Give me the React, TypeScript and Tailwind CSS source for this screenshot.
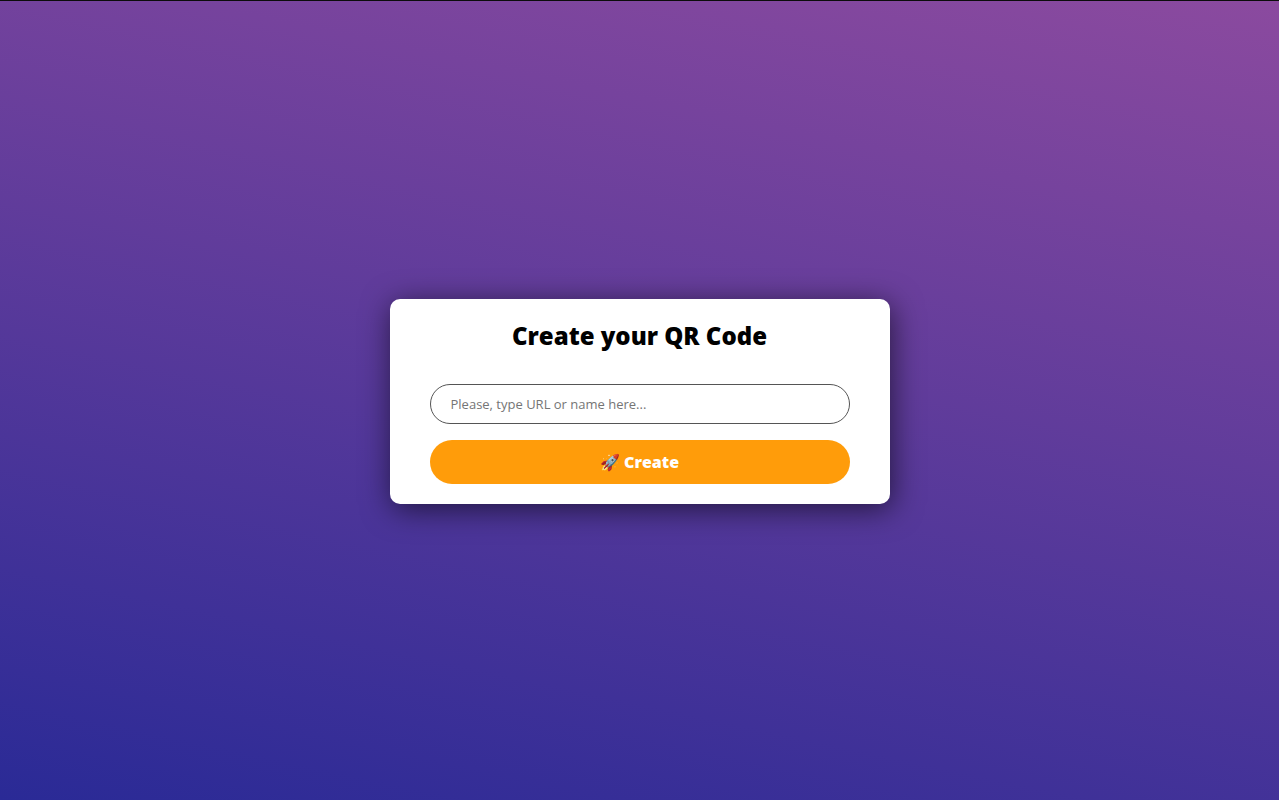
import { useState } from "react";

export default function App() {
  const [value, setValue] = useState("");

  return (
    <main className="flex min-h-screen items-center justify-center border-t border-[#0c0c0c] bg-[linear-gradient(12deg,#2a2a96_0%,#8b4a9f_100%)] px-4 pt-0.5 font-['Open_Sans','Noto_Sans',sans-serif] text-black">
      <form
        onSubmit={(e) => e.preventDefault()}
        className="flex w-full max-w-[500px] flex-col rounded-[10px] bg-white px-10 py-5 shadow-[2px_5px_30px_rgba(0,0,0,0.6)]"
      >
        <h1 className="mb-8 text-center text-2xl leading-[33px] font-extrabold">
          Create your QR Code
        </h1>
        <input
          type="text"
          aria-label="URL or name"
          placeholder="Please, type URL or name here..."
          value={value}
          onChange={(e) => setValue(e.target.value)}
          className="mb-4 h-10 w-full rounded-full border border-[#555] px-5 text-[13px] outline-none placeholder:text-[#757575]"
        />
        <button
          type="submit"
          className="h-11 w-full cursor-pointer rounded-full bg-[#ff9c0a] text-base font-extrabold text-white"
        >
          🚀 Create
        </button>
      </form>
    </main>
  );
}
